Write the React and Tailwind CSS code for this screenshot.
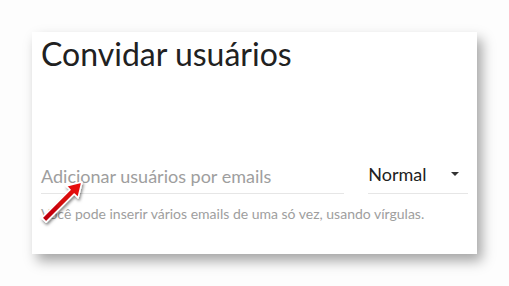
import React from "react";

function RedArrow() {
  return (
    <svg
      className="absolute left-[37px] top-[179px]"
      width="56"
      height="52"
      viewBox="0 0 56 52"
    >
      <defs>
        <filter id="sh" x="-30%" y="-30%" width="160%" height="160%">
          <feDropShadow dx="1" dy="2" stdDeviation="1.5" floodColor="#000" floodOpacity="0.5" />
        </filter>
        <linearGradient id="rg" x1="0" y1="1" x2="1" y2="0">
          <stop offset="0" stopColor="#b8000a" />
          <stop offset="1" stopColor="#ee1111" />
        </linearGradient>
      </defs>
      <g filter="url(#sh)">
        <path
          d="M9.1 43.1 L37.2 15 L41.1 18.9 L45 3 L29.1 6.9 L33 10.8 L4.9 38.9 Z"
          fill="url(#rg)"
          stroke="#fff"
          strokeWidth="1.6"
          strokeLinejoin="round"
        />
      </g>
    </svg>
  );
}

export default function App() {
  return (
    <div
      className="relative w-[509px] h-[286px] bg-[#fdfdfd] pt-[32px] pl-[32px]"
      style={{ fontFamily: "Lato, 'Open Sans', sans-serif" }}
    >
      <div className="w-[445px] h-[222px] bg-white shadow-[5px_7px_12px_rgba(0,0,0,0.35)] px-[9px] pt-[2px]">
        <h1 className="text-[32px] leading-[40px] text-[#212121]">Convidar usuários</h1>
        <div className="mt-[88px] flex items-end gap-[24px]">
          <div className="w-[304px] border-b border-[#e6e6e6] pb-[4px]">
            <span className="text-[18px] leading-[24px] text-[#9e9e9e]">Adicionar usuários por emails</span>
          </div>
          <div className="w-[100px] border-b border-[#e6e6e6] pb-[7px] flex items-center justify-between">
            <span className="text-[18px] leading-[24px] text-[#212121]">Normal</span>
            <svg width="10" height="6" viewBox="0 0 10 6" className="mr-[8px]">
              <path d="M1 1 L9 1 L5 5 Z" fill="#333" />
            </svg>
          </div>
        </div>
        <p className="mt-[12px] text-[14px] leading-[16px] text-[#9e9e9e]">
          Você pode inserir vários emails de uma só vez, usando vírgulas.
        </p>
      </div>
      <RedArrow />
    </div>
  );
}
